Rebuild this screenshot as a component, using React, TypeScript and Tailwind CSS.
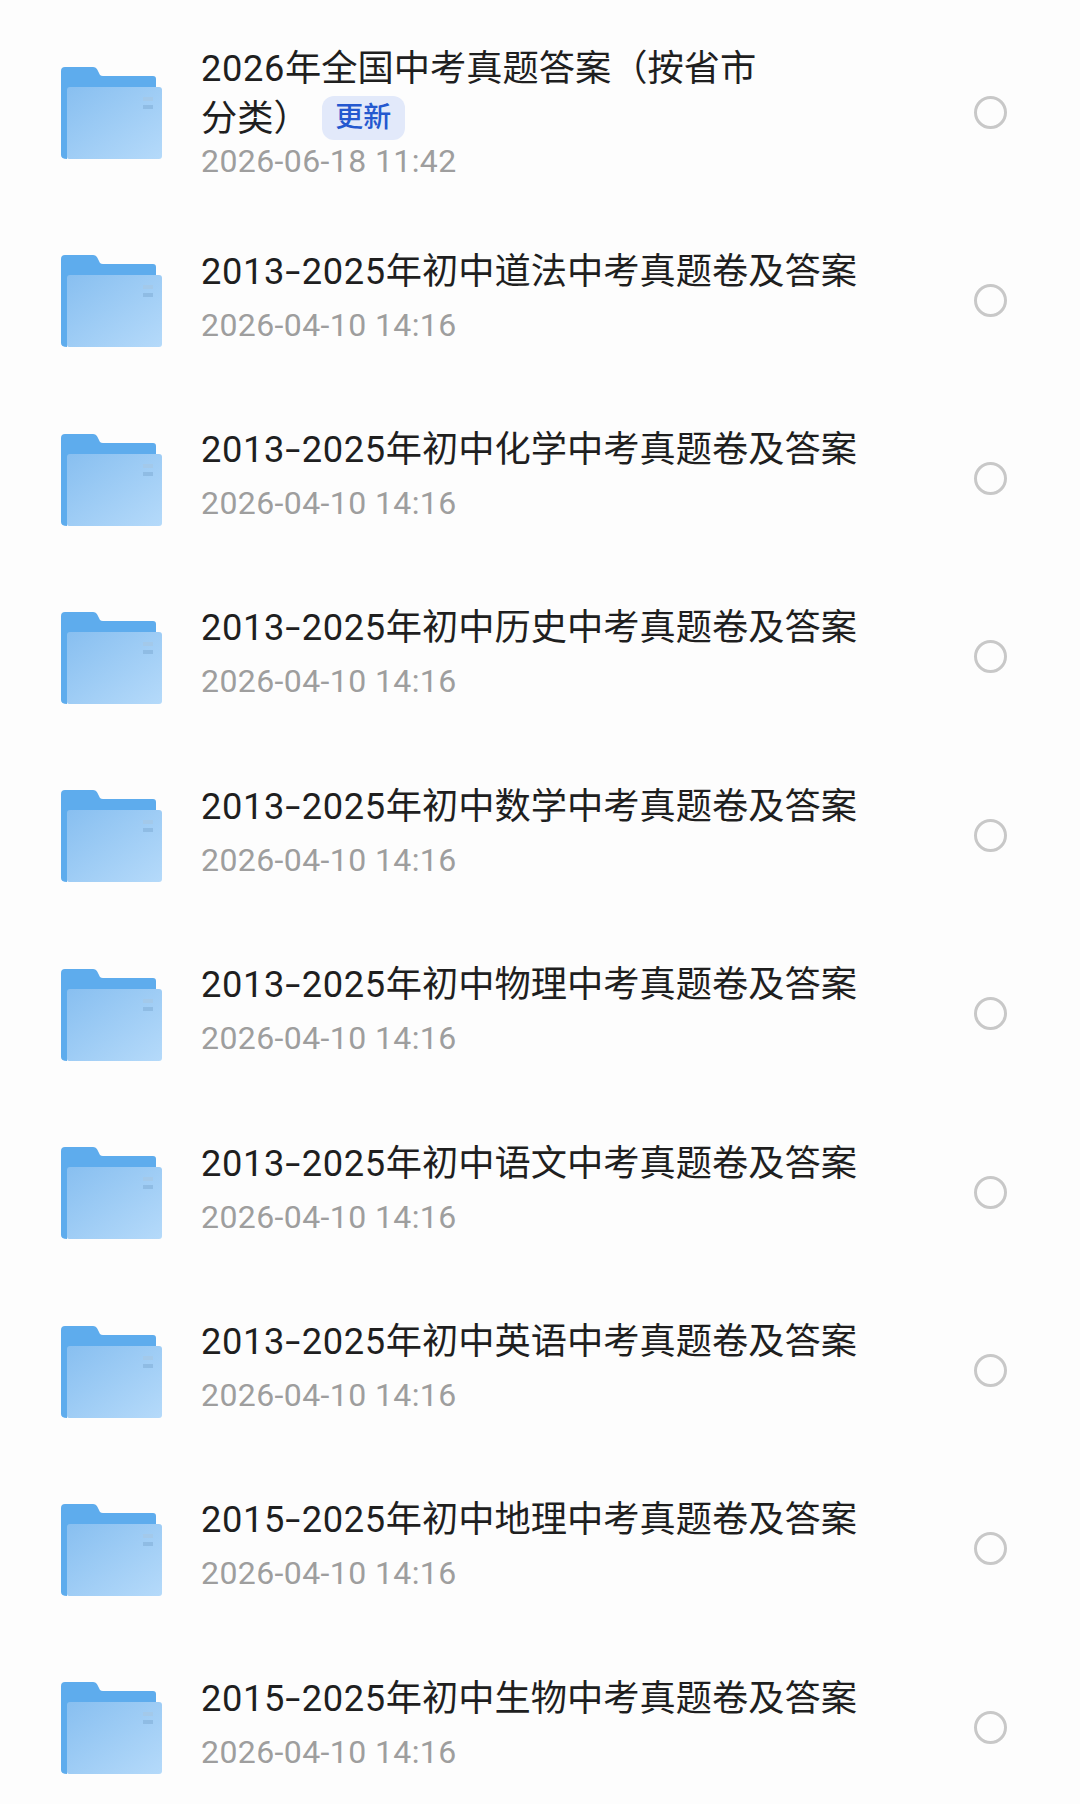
function Folder() {
  return (
    <svg width="102" height="94" viewBox="0 0 102 94" className="mt-[4px] shrink-0">
      <defs>
        <linearGradient id="fg" x1="0" y1="0" x2="1" y2="1">
          <stop offset="0" stopColor="#88bff0" />
          <stop offset="1" stopColor="#b5dafa" />
        </linearGradient>
      </defs>
      <path d="M4 0H32Q35 0 36.500 3L39 8Q40 9 42 9H92Q95 9 95 12V30H6V92Q0 92 0 88V4Q0 0 4 0Z" fill="#5eaced" />
      <path d="M6 23Q6 20 9 20H98Q101 20 101 23V89Q101 92 98 92H8Q6 92 6 90Z" fill="url(#fg)" />
      <rect x="82" y="30" width="10" height="4" fill="#a3c9ea" />
      <rect x="82" y="38" width="10" height="4" fill="#8fbce4" />
    </svg>
  );
}

function Digits({ text }: { text: string }) {
  return (
    <span className="tracking-[0.65px]">
      {text.split("-").map((part, i) => (
        <span key={i}>
          {i > 0 && <span className="mx-[3px] inline-block scale-x-150">-</span>}
          {part}
        </span>
      ))}
    </span>
  );
}

function Row({ years, title, date }: { years: string; title: string; date: string }) {
  return (
    <div className="flex h-[178.4px] items-center pl-[61px] pr-[73px]">
      <Folder />
      <div className="ml-[38px] flex-1 pb-[9px]">
        <div className="whitespace-nowrap text-[36.25px] leading-[50px] text-[#1f1f1f]">
          <Digits text={years} />
          {title}
        </div>
        <div className="mt-[8px] text-[32px] leading-[40px] tracking-[0.4px] text-[#9e9e9e]">{date}</div>
      </div>
      <div className="h-[33px] w-[33px] rounded-full border-[3px] border-[#c8c8c8]" />
    </div>
  );
}

const items = [
  ["2013-2025", "年初中道法中考真题卷及答案"],
  ["2013-2025", "年初中化学中考真题卷及答案"],
  ["2013-2025", "年初中历史中考真题卷及答案"],
  ["2013-2025", "年初中数学中考真题卷及答案"],
  ["2013-2025", "年初中物理中考真题卷及答案"],
  ["2013-2025", "年初中语文中考真题卷及答案"],
  ["2013-2025", "年初中英语中考真题卷及答案"],
  ["2015-2025", "年初中地理中考真题卷及答案"],
  ["2015-2025", "年初中生物中考真题卷及答案"],
];

export default function App() {
  return (
    <div className="h-[1804px] w-[1080px] overflow-hidden bg-[#fdfdfd] font-['Roboto','Noto_Sans_CJK_SC',sans-serif]">
      <div className="flex h-[211px] items-center pl-[61px] pr-[73px] pt-[13px]">
        <Folder />
        <div className="ml-[38px] flex-1">
          <div className="whitespace-nowrap text-[36.25px] leading-[50px] text-[#1f1f1f]">
            <Digits text="2026" />
            年全国中考真题答案（按省市
            <br />
            分类）
            <span className="ml-[12px] inline-flex h-[44px] w-[83px] -translate-y-[3px] items-center justify-center rounded-[12px] bg-[#e2e9fa] align-middle text-[28px] font-medium leading-none text-[#2458cf]">
              更新
            </span>
          </div>
          <div className="-mt-[3px] text-[32px] leading-[40px] tracking-[0.4px] text-[#9e9e9e]">2026-06-18 11:42</div>
        </div>
        <div className="h-[33px] w-[33px] rounded-full border-[3px] border-[#c8c8c8]" />
      </div>
      {items.map(([y, t]) => (
        <Row key={t} years={y} title={t} date="2026-04-10 14:16" />
      ))}
    </div>
  );
}
